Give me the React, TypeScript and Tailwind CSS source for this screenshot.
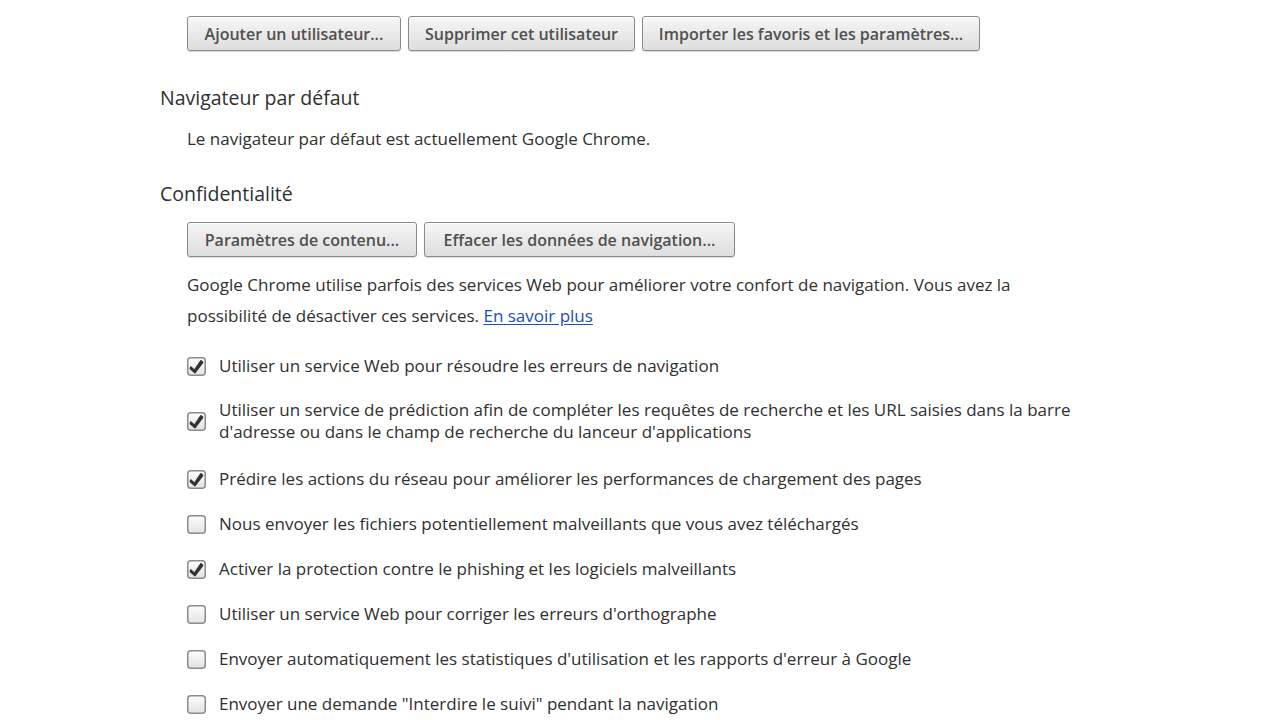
import { ReactNode } from 'react';

const FONT = { fontFamily: '"Open Sans", "Noto Sans", Arial, sans-serif' };

const OPTIONS: { label: ReactNode; checked: boolean; twoLine?: boolean }[] = [
  { label: 'Utiliser un service Web pour résoudre les erreurs de navigation', checked: true },
  {
    label: (
      <>
        Utiliser un service de prédiction afin de compléter les requêtes de recherche et les URL saisies dans la barre
        <br />
        d'adresse ou dans le champ de recherche du lanceur d'applications
      </>
    ),
    checked: true,
    twoLine: true,
  },
  { label: 'Prédire les actions du réseau pour améliorer les performances de chargement des pages', checked: true },
  { label: 'Nous envoyer les fichiers potentiellement malveillants que vous avez téléchargés', checked: false },
  { label: 'Activer la protection contre le phishing et les logiciels malveillants', checked: true },
  { label: "Utiliser un service Web pour corriger les erreurs d'orthographe", checked: false },
  { label: "Envoyer automatiquement les statistiques d'utilisation et les rapports d'erreur à Google", checked: false },
  { label: 'Envoyer une demande "Interdire le suivi" pendant la navigation', checked: false },
];

function Button({ children, w }: { children: ReactNode; w: string }) {
  return (
    <button
      className={`h-[35px] ${w} rounded-[3px] border border-[#8a8a8a] bg-gradient-to-b from-[#f6f6f6] to-[#dedede] pt-[1px] text-[16px] font-semibold text-[#505050] shadow-[inset_0_1px_0_#fff,0_1px_1px_rgba(0,0,0,0.15)]`}
    >
      {children}
    </button>
  );
}

function Checkbox({ checked }: { checked: boolean }) {
  return (
    <svg width="19" height="19" viewBox="0 0 19 19" className="shrink-0">
      <defs>
        <linearGradient id="cb" x1="0" y1="0" x2="0" y2="1">
          <stop offset="0" stopColor="#fdfdfd" />
          <stop offset="1" stopColor="#e2e2e2" />
        </linearGradient>
      </defs>
      <rect x="0.75" y="0.75" width="17.5" height="17.5" rx="3" fill="url(#cb)" stroke="#8c8c8c" strokeWidth="1.5" />
      {checked && (
        <path
          d="M3.8 10 L7.4 13.4 L14 3.8 L15.6 5.4 L8 15.6 L3.4 11.6 Z"
          fill="#333"
          stroke="#333"
          strokeWidth="1.6"
          strokeLinejoin="round"
        />
      )}
    </svg>
  );
}

export default function App() {
  return (
    <div className="min-h-[720px] w-[1278px] overflow-hidden bg-white text-[#303030]" style={FONT}>
      <div className="pl-[160px]">
        <div className="flex gap-[7px] pl-[27px] pt-[16px]">
          <Button w="w-[214px]">Ajouter un utilisateur...</Button>
          <Button w="w-[227px]">Supprimer cet utilisateur</Button>
          <Button w="w-[338px]">Importer les favoris et les paramètres...</Button>
        </div>

        <h3 className="mt-[33px] text-[19.5px] leading-[28px]">Navigateur par défaut</h3>
        <p className="mt-[15px] pl-[27px] text-[17px] leading-[24px]">
          Le navigateur par défaut est actuellement Google Chrome.
        </p>

        <h3 className="mt-[29px] text-[19.5px] leading-[28px]">Confidentialité</h3>
        <div className="mt-[14px] flex gap-[7px] pl-[27px]">
          <Button w="w-[230px]">Paramètres de contenu...</Button>
          <Button w="w-[311px]">Effacer les données de navigation...</Button>
        </div>
        <p className="mt-[12px] w-[900px] pl-[27px] text-[17px] leading-[31px]">
          Google Chrome utilise parfois des services Web pour améliorer votre confort de navigation. Vous avez la
          <br />
          possibilité de désactiver ces services.{' '}
          <a href="#" className="text-[#1a4fb0] underline underline-offset-2">
            En savoir plus
          </a>
        </p>

        <div className="mt-[23px] flex flex-col gap-[21px] pl-[27px]">
          {OPTIONS.map((o, i) => (
            <div key={i} className={`flex items-center gap-[13px] ${i === 2 ? 'mt-[3px]' : ''}`}>
              <Checkbox checked={o.checked} />
              <span className={`text-[17px] ${o.twoLine ? 'leading-[22px]' : 'leading-[24px]'}`}>{o.label}</span>
            </div>
          ))}
        </div>
      </div>
    </div>
  );
}
